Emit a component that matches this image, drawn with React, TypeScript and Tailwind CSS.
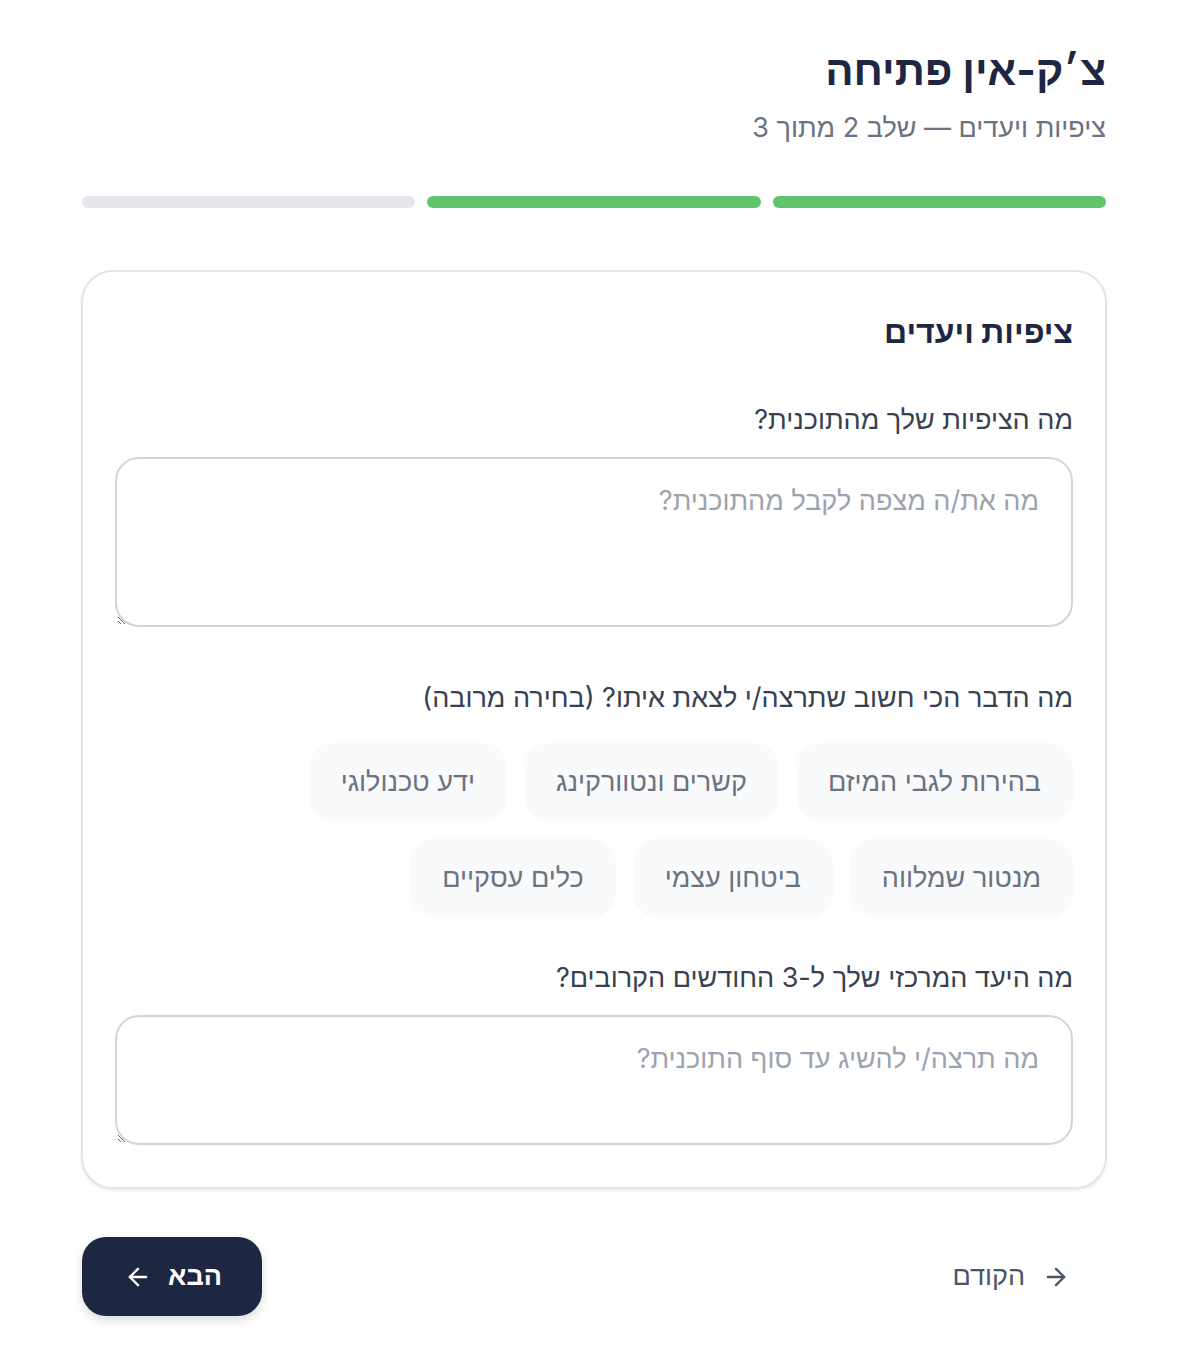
import { ArrowLeft, ArrowRight } from 'lucide-react';

const chipRows = [
  ['בהירות לגבי המיזם', 'קשרים ונטוורקינג', 'ידע טכנולוגי'],
  ['מנטור שמלווה', 'ביטחון עצמי', 'כלים עסקיים'],
];

const steps = [true, true, false];

const font = { fontFamily: 'Inter, "Liberation Sans", Arial, sans-serif' };

export default function App() {
  return (
    <div dir="rtl" className="min-h-screen bg-white pl-[82px] pr-[96px] pt-[42px] text-[#1e2742]" style={font}>
      <div className="w-[1024px]">
        {/* Header */}
        <h1 className="text-[42px] font-bold leading-[56px]">צ׳ק-אין פתיחה</h1>
        <p className="mt-[10px] text-[27px] leading-[40px] text-[#6b7280]">ציפיות ויעדים — שלב 2 מתוך 3</p>

        {/* Progress */}
        <div className="mt-[48px] flex gap-[12px]">
          {steps.map((done, i) => (
            <div
              key={i}
              className={done ? 'h-[12px] flex-1 rounded-full bg-[#5fc46b]' : 'h-[12px] flex-1 rounded-full bg-[#e5e7eb]'}
            />
          ))}
        </div>

        {/* Card */}
        <div className="-mx-px mt-[62px] rounded-[32px] border-2 border-[#e3e5e8] bg-white px-[32px] pb-[42px] pt-[36px] shadow-[0_2px_3px_rgba(0,0,0,0.08)]">
          <h2 className="text-[32px] font-bold leading-[48px]">ציפיות ויעדים</h2>

          <label className="mt-[44px] block text-[27px] leading-[40px] text-[#374151]">מה הציפיות שלך מהתוכנית?</label>
          <textarea
            dir="rtl"
            placeholder="מה את/ה מצפה לקבל מהתוכנית?"
            className="mt-[17px] block h-[170px] w-full rounded-[24px] border-2 border-[#d1d5db] px-[32px] py-[22px] text-[27px] leading-[40px] text-[#374151] outline-none placeholder:text-[#9ca3af]"
            style={font}
          />

          <label className="mt-[51px] block text-[27px] leading-[40px] text-[#374151]">
            מה הדבר הכי חשוב שתרצה/י לצאת איתו? (בחירה מרובה)
          </label>
          <div className="mt-[25px] flex flex-col gap-[18px]">
            {chipRows.map((row, r) => (
              <div key={r} className="flex gap-[17px]">
                {row.map((c) => (
                  <button
                    key={c}
                    className="flex h-[78px] items-center rounded-[24px] bg-[#f9fafb] px-[32px] text-[27px] text-[#6b7280]"
                    style={font}
                  >
                    {c}
                  </button>
                ))}
              </div>
            ))}
          </div>

          <label className="mt-[41px] block text-[27px] leading-[40px] text-[#374151]">
            מה היעד המרכזי שלך ל-3 החודשים הקרובים?
          </label>
          <textarea
            dir="rtl"
            placeholder="מה תרצה/י להשיג עד סוף התוכנית?"
            className="mt-[17px] block h-[130px] w-full rounded-[24px] border-2 border-[#d1d5db] px-[32px] py-[22px] text-[27px] leading-[40px] text-[#374151] outline-none placeholder:text-[#9ca3af]"
            style={font}
          />
        </div>

        {/* Navigation */}
        <div className="mt-[48px] flex items-center justify-between">
          <button className="flex h-[79px] items-center gap-[17px] px-[36px] text-[27px] text-[#4b5563]" style={font}>
            <ArrowRight className="h-[28px] w-[28px]" strokeWidth={2} />
            הקודם
          </button>
          <button
            className="flex h-[79px] items-center gap-[16px] rounded-[24px] bg-[#1e2742] pl-[42px] pr-[40px] text-[27px] font-bold text-white shadow-[0_4px_10px_rgba(0,0,0,0.15)]"
            style={font}
          >
            הבא
            <ArrowLeft className="h-[28px] w-[28px]" strokeWidth={2} />
          </button>
        </div>
      </div>
    </div>
  );
}
